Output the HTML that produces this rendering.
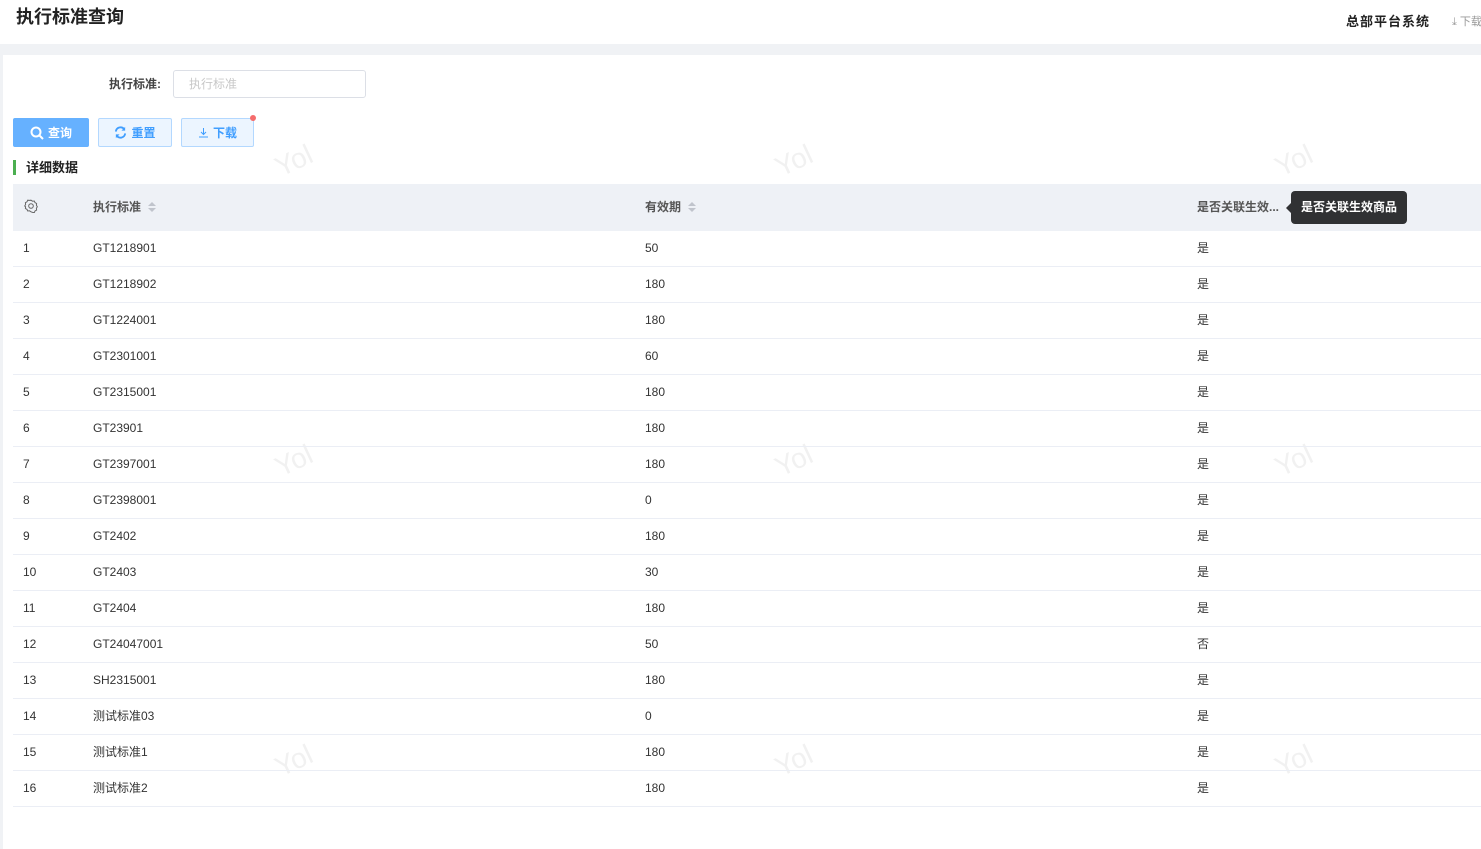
<!DOCTYPE html>
<html><head><meta charset="utf-8"><style>
*{margin:0;padding:0;box-sizing:border-box}
body{width:1481px;height:849px;overflow:hidden;background:#f0f2f5;font-family:"Liberation Sans","Noto Sans CJK SC",sans-serif;color:#333;position:relative}
.top{position:absolute;left:0;top:0;width:1481px;height:44px;background:#fff}
.title{position:absolute;left:16px;top:6px;font-size:18px;font-weight:bold;color:#222;line-height:22px}
.sys{position:absolute;left:1346px;top:14px;font-size:13px;font-weight:bold;color:#222;line-height:16px;letter-spacing:1px}
.dl{position:absolute;left:1452px;top:15px;font-size:11px;color:#999;white-space:nowrap;line-height:14px}
.card{position:absolute;left:3px;top:55px;width:1478px;height:794px;background:#fff}
.lbl{position:absolute;left:109px;top:76px;font-size:12px;font-weight:bold;color:#444;line-height:16px}
.inp{position:absolute;left:173px;top:70px;width:193px;height:28px;border:1px solid #dcdfe6;border-radius:3px;font-size:12px;color:#c8c8c8;padding:5px 15px;line-height:16px}
.btn{position:absolute;top:118px;height:29px;border-radius:2px;font-size:12px;font-weight:bold;display:flex;align-items:center;justify-content:center;gap:4px;line-height:14px}
.b1{left:13px;width:76px;background:#66b1ff;color:#fff}
.b2{left:98px;width:74px;background:#ecf5ff;border:1px solid #b3d8ff;color:#409eff}
.b3{left:181px;width:73px;background:#ecf5ff;border:1px solid #b3d8ff;color:#409eff}
.dot{position:absolute;left:250px;top:115px;width:6px;height:6px;border-radius:50%;background:#f56c6c}
.sec{position:absolute;left:13px;top:160px;height:15px;border-left:3px solid #4caf50;padding-left:10px;font-size:13px;font-weight:bold;line-height:15px;color:#222}
.thead{position:absolute;left:13px;top:184px;width:1468px;height:47px;background:#eef1f6;font-size:12px;font-weight:bold;color:#555}
.thead span{position:absolute;top:15px;line-height:16px}
.row{position:absolute;left:13px;width:1468px;height:36px;border-bottom:1px solid #ebeef5;font-size:12px;color:#333}
.row span{position:absolute;top:9px;line-height:16px}
.tip{position:absolute;left:1291px;top:191px;width:116px;height:33px;background:#303133;border-radius:4px;color:#fff;font-size:12px;font-weight:bold;padding:8px 10px;line-height:16px}
.tip:before{content:"";position:absolute;left:-5px;top:12px;border:5px solid transparent;border-left:0;border-right-color:#303133}
.wm{position:absolute;font-size:28px;color:#f1f1f1;transform:rotate(-25deg)}
.sort{display:inline-block;vertical-align:-2px;margin-left:6px;width:10px}
</style></head><body>
<div class="top"><div class="title">执行标准查询</div><div class="sys">总部平台系统</div><div class="dl">⤓ 下载</div></div>
<div class="card"></div>
<div class="wm" style="left:275px;top:145px">Yol</div><div class="wm" style="left:775px;top:145px">Yol</div><div class="wm" style="left:1275px;top:145px">Yol</div>
<div class="wm" style="left:275px;top:445px">Yol</div><div class="wm" style="left:775px;top:445px">Yol</div><div class="wm" style="left:1275px;top:445px">Yol</div>
<div class="wm" style="left:275px;top:745px">Yol</div><div class="wm" style="left:775px;top:745px">Yol</div><div class="wm" style="left:1275px;top:745px">Yol</div>
<div class="lbl">执行标准:</div><div class="inp">执行标准</div>
<div class="btn b1"><svg width="14" height="14" viewBox="0 0 14 14"><circle cx="6" cy="6" r="4.5" fill="none" stroke="#fff" stroke-width="2"/><path d="M9.5 9.5L13 13" stroke="#fff" stroke-width="2"/></svg>查询</div>
<div class="btn b2"><svg width="13" height="13" viewBox="0 0 14 14"><path d="M2 6A5 5 0 0 1 11 3.5M12 8A5 5 0 0 1 3 10.5" fill="none" stroke="#409eff" stroke-width="2"/><path d="M12 1v4h-4zM2 13v-4h4z" fill="#409eff"/></svg>重置</div>
<div class="btn b3"><svg width="11" height="11" viewBox="0 0 11 11"><path d="M5.5 1v6M3 5l2.5 2.5L8 5M1 10h9" fill="none" stroke="#409eff"/></svg> 下载</div><div class="dot"></div>
<div class="sec">详细数据</div>
<div class="thead">
<span style="left:11px;top:15px"><svg width="14" height="14" viewBox="0 0 14 14"><circle cx="7" cy="7" r="2.3" fill="none" stroke="#666"/><path d="M7 1.2l1.5 1 1.8-.2.7 1.6 1.6.9-.2 1.8.9 1.5-.9 1.5.2 1.8-1.6.9-.7 1.6-1.8-.2L7 12.8l-1.5-1-1.8.2-.7-1.6-1.6-.9.2-1.8L.7 7l.9-1.5-.2-1.8 1.6-.9.7-1.6 1.8.2z" fill="none" stroke="#666"/></svg></span>
<span style="left:80px">执行标准<svg class="sort" viewBox="0 0 10 12" height="12"><path d="M5 1l4 4H1zM5 11l4-4H1z" fill="#c0c4cc"/></svg></span>
<span style="left:632px">有效期<svg class="sort" viewBox="0 0 10 12" height="12"><path d="M5 1l4 4H1zM5 11l4-4H1z" fill="#c0c4cc"/></svg></span>
<span style="left:1184px">是否关联生效...</span>
</div>
<div class="tip">是否关联生效商品</div>
<div id="rows"></div>
<script>
var d=[["GT1218901",50,"是"],["GT1218902",180,"是"],["GT1224001",180,"是"],["GT2301001",60,"是"],["GT2315001",180,"是"],["GT23901",180,"是"],["GT2397001",180,"是"],["GT2398001",0,"是"],["GT2402",180,"是"],["GT2403",30,"是"],["GT2404",180,"是"],["GT24047001",50,"否"],["SH2315001",180,"是"],["测试标准03",0,"是"],["测试标准1",180,"是"],["测试标准2",180,"是"]];
var h="";d.forEach(function(r,i){h+='<div class="row" style="top:'+(231+i*36)+'px"><span style="left:10px">'+(i+1)+'</span><span style="left:80px">'+r[0]+'</span><span style="left:632px">'+r[1]+'</span><span style="left:1184px">'+r[2]+'</span></div>'});
document.getElementById("rows").innerHTML=h;
</script>
</body></html>
